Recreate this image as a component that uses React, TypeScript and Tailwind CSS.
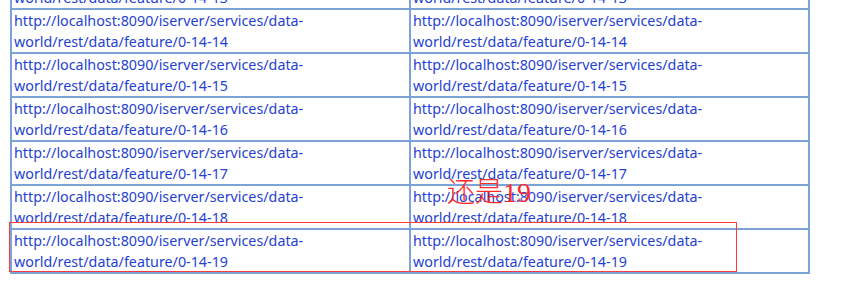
import React from 'react';

const rows = ['13', '14', '15', '16', '17', '18', '19'];

const url = (n: string) => (
  <>
    http://localhost:8090/iserver/services/data-
    <br />
    world/rest/data/feature/0-14-{n}
  </>
);

export default function App() {
  return (
    <div className="relative w-[847px] h-[287px] overflow-hidden bg-white font-['Noto_Sans',sans-serif]">
      <table className="ml-[10px] mt-[-36px] w-[800px] border-separate border-spacing-0 border-l-2 border-t-2 border-[#7ba3d6] table-fixed">
        <tbody>
          {rows.map((n) => (
            <tr key={n}>
              {[0, 1].map((c) => (
                <td
                  key={c}
                  className="h-[44px] border-b-2 border-r-2 border-[#7ba3d6] pl-[2px] align-middle text-[14.3px] leading-[21px] text-[#1f42d4]"
                >
                  {url(n)}
                </td>
              ))}
            </tr>
          ))}
        </tbody>
      </table>

      {/* annotation drawn over the screenshot */}
      <div className="absolute left-[9px] top-[222px] w-[728px] h-[50px] border border-[#ff3b3b]" />
      <div className="absolute left-[447px] top-[174px] text-[28px] leading-[38px] text-[#ff2a2a] font-['Liberation_Serif','Noto_Sans_CJK_SC',serif] font-light">
        还是19
      </div>
    </div>
  );
}
